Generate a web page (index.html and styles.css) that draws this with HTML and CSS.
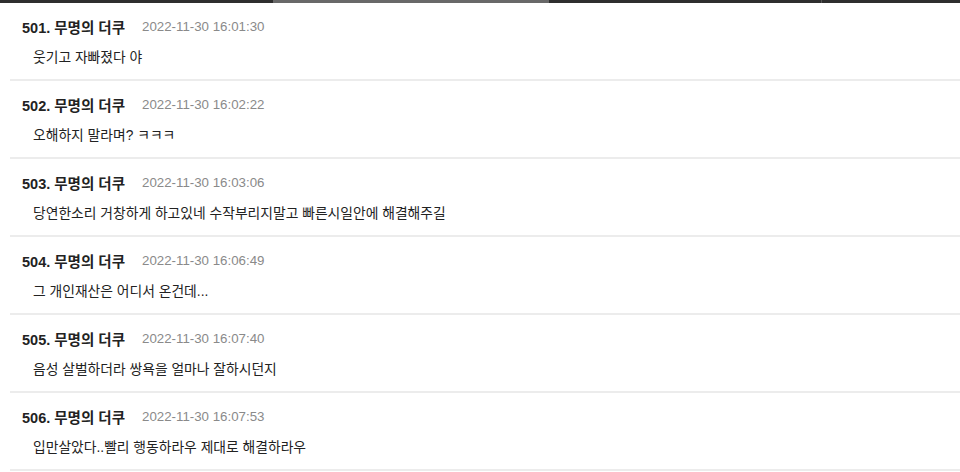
FILE: index.html
```html
<!DOCTYPE html>
<html lang="ko">
<head>
<meta charset="utf-8">
<title>댓글</title>
<link rel="stylesheet" href="styles.css">
</head>
<body>
<div class="topbar">
  <div class="seg seg-dark seg-a"></div>
  <div class="seg seg-light seg-b"></div>
  <div class="seg seg-dark seg-c"></div>
  <div class="seg seg-tick"></div>
  <div class="seg seg-dark seg-d"></div>
</div>
<ul class="list">
  <li class="item">
    <div class="head"><span class="name">501. 무명의 더쿠</span><span class="date">2022-11-30 16:01:30</span></div>
    <div class="body">웃기고 자빠졌다 야</div>
  </li>
  <li class="item">
    <div class="head"><span class="name">502. 무명의 더쿠</span><span class="date">2022-11-30 16:02:22</span></div>
    <div class="body">오해하지 말라며? ㅋㅋㅋ</div>
  </li>
  <li class="item">
    <div class="head"><span class="name">503. 무명의 더쿠</span><span class="date">2022-11-30 16:03:06</span></div>
    <div class="body">당연한소리 거창하게 하고있네 수작부리지말고 빠른시일안에 해결해주길</div>
  </li>
  <li class="item">
    <div class="head"><span class="name">504. 무명의 더쿠</span><span class="date">2022-11-30 16:06:49</span></div>
    <div class="body">그 개인재산은 어디서 온건데...</div>
  </li>
  <li class="item">
    <div class="head"><span class="name">505. 무명의 더쿠</span><span class="date">2022-11-30 16:07:40</span></div>
    <div class="body">음성 살벌하더라 쌍욕을 얼마나 잘하시던지</div>
  </li>
  <li class="item">
    <div class="head"><span class="name">506. 무명의 더쿠</span><span class="date">2022-11-30 16:07:53</span></div>
    <div class="body">입만살았다..빨리 행동하라우 제대로 해결하라우</div>
  </li>
</ul>
</body>
</html>
```
FILE: styles.css
```css
* { box-sizing: border-box; }
html, body {
  margin: 0;
  padding: 0;
  background: #ffffff;
  overflow: hidden;
}
body {
  font-family: "Liberation Sans", "Noto Sans CJK KR", sans-serif;
  color: #222222;
}
.topbar {
  display: flex;
  height: 3px;
}
.seg { height: 100%; }
.seg-dark { background: #2e2e2e; }
.seg-light { background: #686868; }
.seg-a { width: 273px; }
.seg-b { width: 276px; }
.seg-c { width: 272px; }
.seg-tick { width: 1px; background: #555555; }
.seg-d { flex: 1; }

.list {
  list-style: none;
  margin: 0;
  padding: 0 0 0 10px;
}
.item {
  height: 78px;
  border-bottom: 2px solid #ececec;
  padding-top: 13px;
}
.head {
  display: flex;
  align-items: center;
  height: 20px;
  padding-left: 12px;
}
.name {
  font-size: 14.5px;
  font-weight: bold;
  color: #222222;
}
.date {
  margin-left: 17px;
  font-size: 13.3px;
  color: #8a8a8a;
}
.body {
  margin-top: 12px;
  height: 20px;
  line-height: 20px;
  padding-left: 23px;
  font-size: 13.8px;
  color: #222222;
}
```
